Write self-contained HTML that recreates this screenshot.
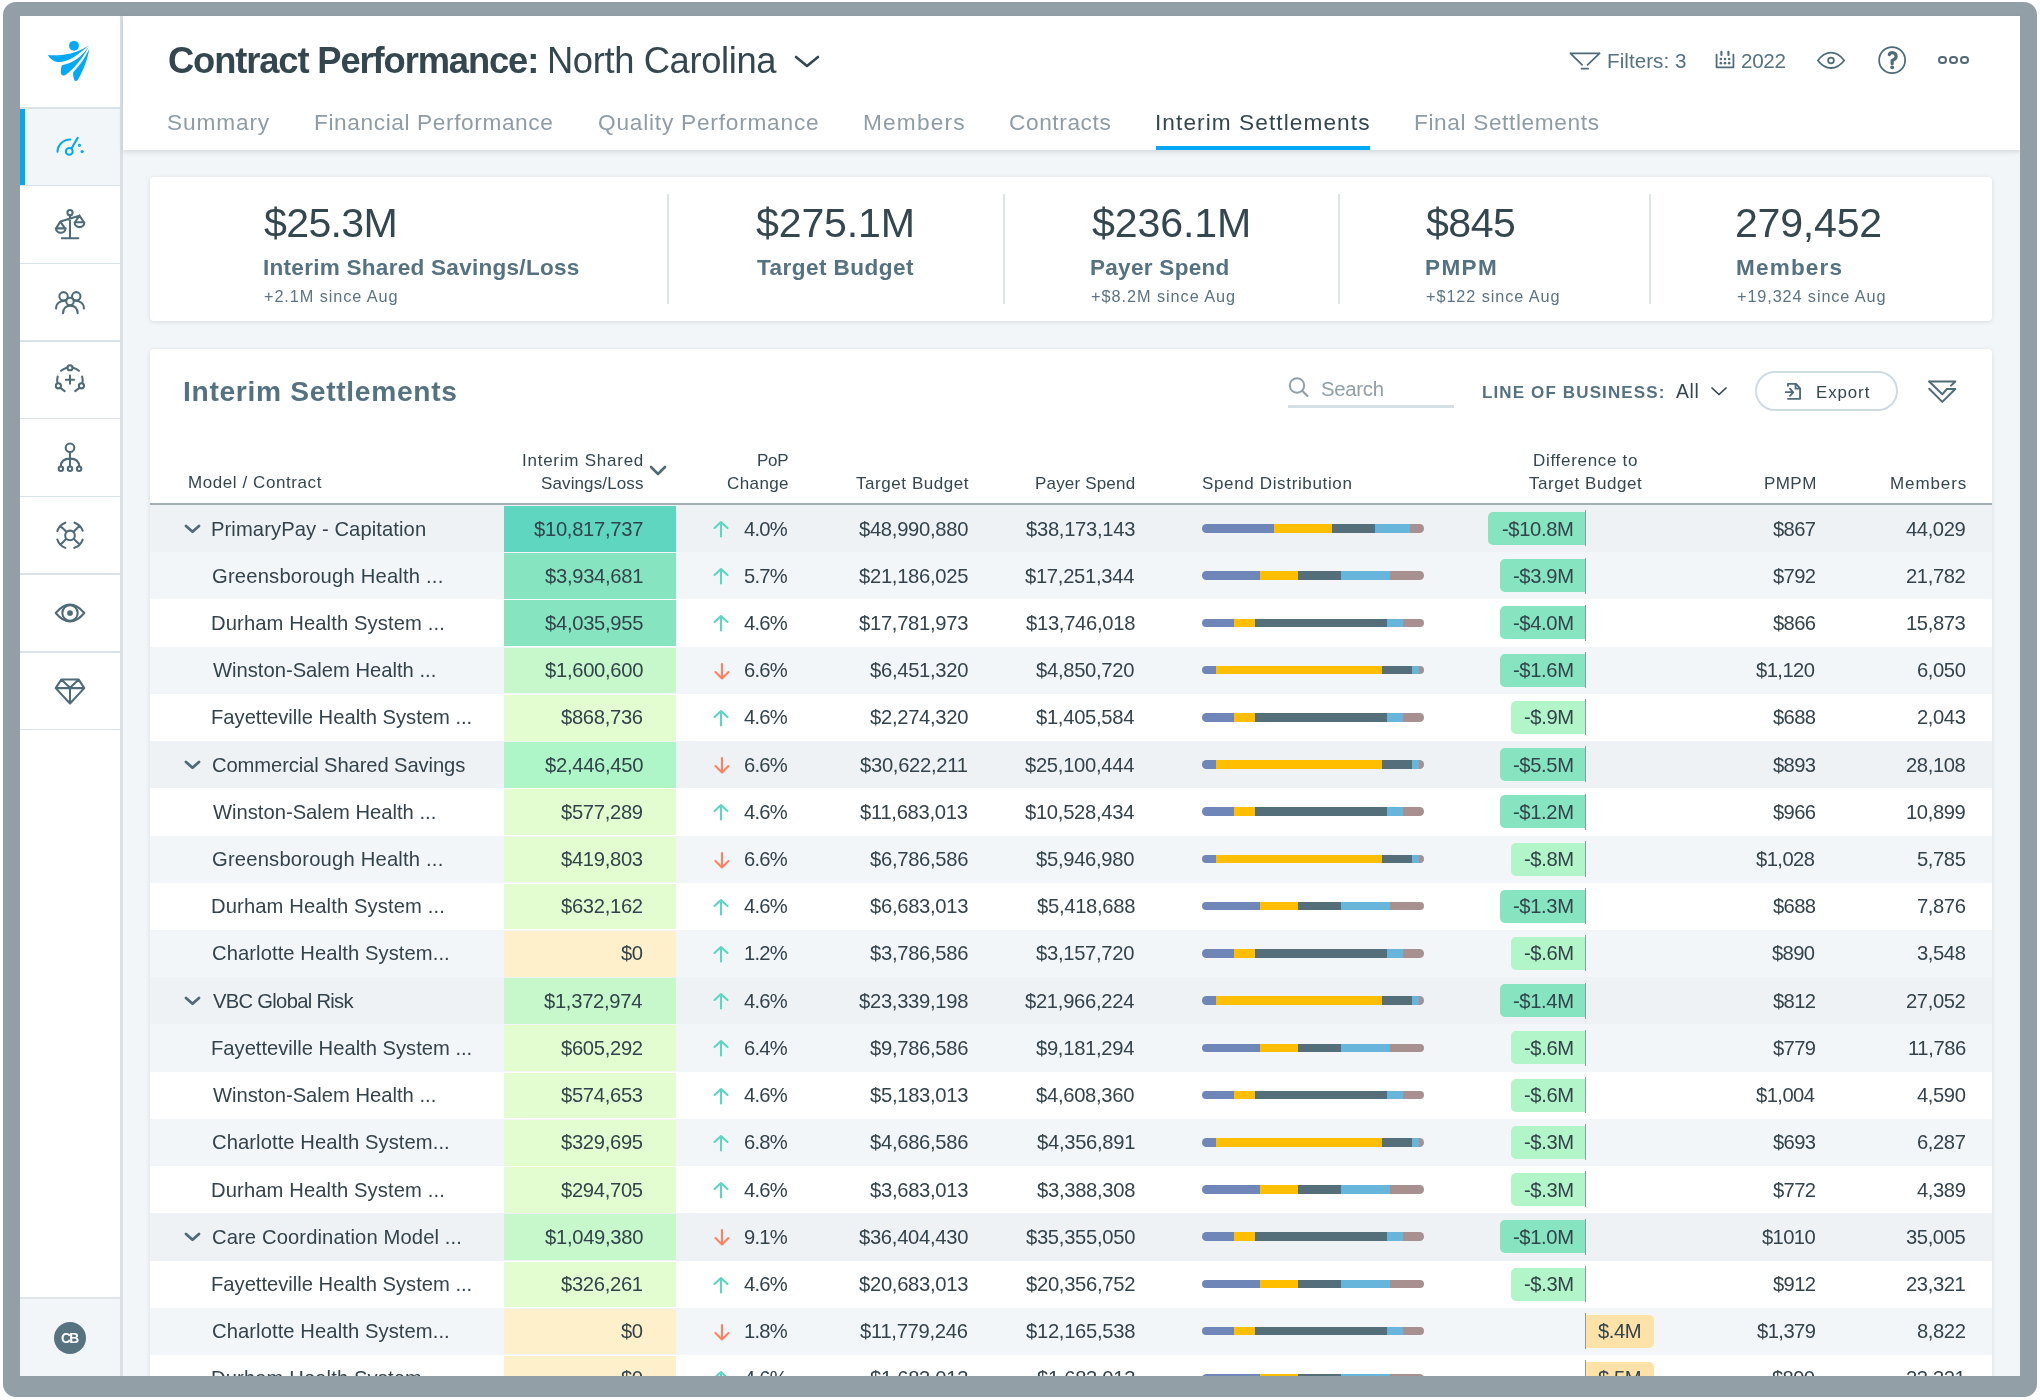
<!DOCTYPE html>
<html><head><meta charset="utf-8"><style>
html,body{margin:0;padding:0;}
body{width:2040px;height:1400px;position:relative;overflow:hidden;background:#ffffff;font-family:"Liberation Sans",sans-serif;}
.t{position:absolute;white-space:nowrap;line-height:1;will-change:transform;}
.r{position:absolute;}
</style></head><body>
<div class="r" style="left:3px;top:2px;width:2034px;height:1395px;background:#939fa6;border-radius:13px;"></div>
<div class="r" style="left:20px;top:16px;width:2000px;height:1360px;background:#f3f6f8;"></div>
<div class="r" style="left:20px;top:16px;width:100px;height:1360px;background:#ffffff;"></div>
<div class="r" style="left:120px;top:16px;width:3px;height:1360px;background:#d9e1e6;"></div>
<div class="r" style="left:20px;top:108px;width:100px;height:77px;background:#f3f6f9;"></div>
<div class="r" style="left:20px;top:108px;width:5px;height:77px;background:#03a9f4;"></div>
<div class="r" style="left:20px;top:107.1px;width:100px;height:1.6px;background:#d9e2e7;"></div>
<div class="r" style="left:20px;top:184.8px;width:100px;height:1.6px;background:#d9e2e7;"></div>
<div class="r" style="left:20px;top:262.5px;width:100px;height:1.6px;background:#d9e2e7;"></div>
<div class="r" style="left:20px;top:340.2px;width:100px;height:1.6px;background:#d9e2e7;"></div>
<div class="r" style="left:20px;top:417.9px;width:100px;height:1.6px;background:#d9e2e7;"></div>
<div class="r" style="left:20px;top:495.6px;width:100px;height:1.6px;background:#d9e2e7;"></div>
<div class="r" style="left:20px;top:573.3px;width:100px;height:1.6px;background:#d9e2e7;"></div>
<div class="r" style="left:20px;top:651.0px;width:100px;height:1.6px;background:#d9e2e7;"></div>
<div class="r" style="left:20px;top:728.7px;width:100px;height:1.6px;background:#d9e2e7;"></div>
<div class="r" style="left:20px;top:1298px;width:100px;height:78px;background:#f3f6f8;"></div>
<div class="r" style="left:20px;top:1297px;width:100px;height:2px;background:#dfe6eb;"></div>
<svg class="r" style="left:40px;top:30px;" width="60" height="60" viewBox="0 0 1400 1400" fill="none"><g fill="#03a9f4"><circle cx="793" cy="370" r="115"/><path d="M185,585 C420,600 820,590 1140,355 C900,580 650,750 430,745 C300,740 230,660 185,585 Z"/><path d="M510,820 C760,780 960,640 1145,380 C1000,650 800,900 610,1040 C540,1080 490,1060 488,1000 C485,920 495,860 510,820 Z"/><path d="M775,985 C900,850 1040,690 1150,440 C1110,700 1010,950 885,1160 C845,1210 800,1195 790,1130 C772,1060 770,1020 775,985 Z"/></g></svg>
<svg class="r" style="left:45px;top:120px;" width="50" height="50" viewBox="0 0 1400 1400" fill="none"><g stroke="#03a9f4" stroke-width="58" stroke-linecap="round" stroke-linejoin="round"><path d="M350,890 A360,350 0 0 1 710,545"/><circle cx="680" cy="880" r="95"/><path d="M745,790 L915,500"/><circle cx="965" cy="710" r="28" stroke-width="36"/></g><circle cx="1040" cy="885" r="45" fill="#03a9f4"/></svg>
<svg class="r" style="left:45px;top:198px;" width="50" height="50" viewBox="0 0 1400 1400" fill="none"><g stroke="#4f6b78" stroke-width="58" stroke-linecap="round" stroke-linejoin="round"><circle cx="700" cy="410" r="72"/><path d="M700,482 L700,1110 M470,1125 L935,1125 M430,660 L965,495 M430,660 L310,850 M430,660 L560,850 M305,850 L578,850 M305,850 A137,137 0 0 0 578,850 M965,495 L840,680 M965,495 L1090,680 M830,680 L1102,680 M830,680 A136,136 0 0 0 1102,680"/></g></svg>
<svg class="r" style="left:45px;top:276px;" width="50" height="50" viewBox="0 0 1400 1400" fill="none"><g stroke="#4f6b78" stroke-width="58" stroke-linecap="round" stroke-linejoin="round"><circle cx="520" cy="570" r="118"/><circle cx="875" cy="570" r="118"/><circle cx="700" cy="712" r="105"/><path d="M310,910 C310,770 420,690 565,690 M1090,910 C1090,770 980,690 835,690 M505,1045 C505,900 600,830 710,830 C820,830 915,900 915,1045"/></g></svg>
<svg class="r" style="left:45px;top:354px;" width="50" height="50" viewBox="0 0 1400 1400" fill="none"><g stroke="#4f6b78" stroke-width="58" stroke-linecap="round" stroke-linejoin="round"><circle cx="700" cy="385" r="72"/><circle cx="375" cy="890" r="72"/><circle cx="1020" cy="890" r="72"/><path d="M450,470 C510,420 570,395 630,378 M770,378 C830,395 890,420 950,470 M355,630 C335,700 335,760 350,815 M430,950 L550,1040 M1040,630 C1060,700 1060,760 1048,815 M965,950 L845,1040 M700,605 L700,830 M585,720 L815,720"/></g></svg>
<svg class="r" style="left:45px;top:432px;" width="50" height="50" viewBox="0 0 1400 1400" fill="none"><g stroke="#4f6b78" stroke-width="58" stroke-linecap="round" stroke-linejoin="round"><circle cx="700" cy="440" r="120"/><path d="M700,560 L700,965 M445,965 C445,800 560,745 700,745 C840,745 955,800 955,965"/><circle cx="445" cy="1030" r="62"/><circle cx="700" cy="1030" r="62"/><circle cx="955" cy="1030" r="62"/></g></svg>
<svg class="r" style="left:45px;top:510px;" width="50" height="50" viewBox="0 0 1400 1400" fill="none"><g stroke="#4f6b78" stroke-width="58" stroke-linecap="round" stroke-linejoin="round"><circle cx="700" cy="712" r="135"/><path d="M345,590 A365,365 0 0 1 570,355 M825,355 A365,365 0 0 1 1055,580 M1055,830 A365,365 0 0 1 820,1060 M570,1060 A365,365 0 0 1 345,825 M600,610 L430,445 M800,610 L970,440 M590,815 L440,965 M810,815 L960,960"/></g></svg>
<svg class="r" style="left:45px;top:588px;" width="50" height="50" viewBox="0 0 1400 1400" fill="none"><g stroke="#4f6b78" stroke-width="58" stroke-linecap="round" stroke-linejoin="round"><path d="M300,700 C450,520 570,465 700,465 C830,465 950,520 1100,700 C950,880 830,935 700,935 C570,935 450,880 300,700 Z"/><circle cx="700" cy="700" r="215"/></g><circle cx="700" cy="700" r="80" fill="#4f6b78"/></svg>
<svg class="r" style="left:45px;top:666px;" width="50" height="50" viewBox="0 0 1400 1400" fill="none"><g stroke="#4f6b78" stroke-width="58" stroke-linecap="round" stroke-linejoin="round"><path d="M455,380 L945,380 L1100,620 L700,1050 L300,620 Z M300,620 L1100,620 M470,390 L700,610 L930,390 M700,620 L700,1040"/></g></svg>
<div class="r" style="left:54px;top:1322px;width:32px;height:32px;border-radius:50%;background:#587380;"></div>
<div class="t" style="left:60.90px;top:1332.00px;font-size:13.81px;color:#ffffff;font-weight:700;letter-spacing:-1.700px;">CB</div>
<div class="r" style="left:123px;top:16px;width:1897px;height:134px;background:#ffffff;box-shadow:0 2px 5px rgba(60,80,90,0.18);"></div>
<div class="t" style="left:167.50px;top:43.00px;font-size:36.34px;color:#34474f;font-weight:700;letter-spacing:-1.120px;">Contract Performance:</div>
<div class="t" style="left:547.20px;top:43.00px;font-size:36.34px;color:#34474f;letter-spacing:-0.369px;">North Carolina</div>
<svg class="r" style="left:794px;top:55px;" width="26" height="13" viewBox="0 0 26 13" fill="none"><path d="M2,2 L13,11 L24,2" stroke="#34474f" stroke-width="2.6" stroke-linecap="round" stroke-linejoin="round"/></svg>
<div class="t" style="left:166.80px;top:111.00px;font-size:22.67px;color:#8e9da5;letter-spacing:0.867px;">Summary</div>
<div class="t" style="left:314.10px;top:111.00px;font-size:22.67px;color:#8e9da5;letter-spacing:0.610px;">Financial Performance</div>
<div class="t" style="left:598.10px;top:111.00px;font-size:22.67px;color:#8e9da5;letter-spacing:0.783px;">Quality Performance</div>
<div class="t" style="left:862.80px;top:111.00px;font-size:22.67px;color:#8e9da5;letter-spacing:1.183px;">Members</div>
<div class="t" style="left:1009.00px;top:111.00px;font-size:22.67px;color:#8e9da5;letter-spacing:0.600px;">Contracts</div>
<div class="t" style="left:1154.90px;top:111.00px;font-size:22.67px;color:#34474f;letter-spacing:1.072px;">Interim Settlements</div>
<div class="t" style="left:1414.00px;top:111.00px;font-size:22.67px;color:#8e9da5;letter-spacing:0.625px;">Final Settlements</div>
<div class="r" style="left:1156px;top:145.5px;width:214px;height:4px;background:#03a9f4;"></div>
<svg class="r" style="left:1565px;top:42px;" width="40" height="40" viewBox="0 0 1400 1400" fill="none"><g stroke="#4f6b78" stroke-width="60" stroke-linecap="round" stroke-linejoin="round"><path d="M190,400 L1210,400 M190,400 L600,800 M1210,400 L790,800 M580,935 L810,935"/></g></svg>
<div class="t" style="left:1606.70px;top:51.00px;font-size:20.64px;color:#557280;letter-spacing:0.044px;">Filters: 3</div>
<svg class="r" style="left:1705px;top:42px;" width="40" height="40" viewBox="0 0 1400 1400" fill="none"><g stroke="#4f6b78" stroke-width="62" stroke-linecap="round"><path d="M405,440 L405,885 L995,885 L995,440" stroke-linejoin="round"/><path d="M575,345 L575,455 M820,345 L820,455" stroke-width="75"/></g><g fill="#4f6b78"><circle cx="555" cy="595" r="45"/><circle cx="700" cy="595" r="45"/><circle cx="845" cy="595" r="45"/><circle cx="555" cy="740" r="45"/><circle cx="700" cy="740" r="45"/><circle cx="845" cy="740" r="45"/></g></svg>
<div class="t" style="left:1741.30px;top:51.00px;font-size:20.64px;color:#557280;letter-spacing:-0.300px;">2022</div>
<svg class="r" style="left:1811px;top:40px;" width="40" height="40" viewBox="0 0 1400 1400" fill="none"><g stroke="#4f6b78" stroke-width="62"><path d="M240,715 C420,480 560,445 700,445 C840,445 980,480 1160,715 C980,950 840,980 700,980 C560,980 420,950 240,715 Z" stroke-linejoin="round"/><circle cx="700" cy="715" r="100"/></g></svg>
<svg class="r" style="left:1872px;top:40px;" width="40" height="40" viewBox="0 0 1400 1400" fill="none"><circle cx="705" cy="705" r="455" stroke="#4f6b78" stroke-width="62"/><path d="M605,510 C620,455 665,440 712,440 C790,440 845,500 845,580 C845,650 790,690 705,715 L705,830" stroke="#4f6b78" stroke-width="112" stroke-linecap="round" stroke-linejoin="round"/><circle cx="705" cy="955" r="66" fill="#4f6b78"/></svg>
<div class="r" style="left:1938.0px;top:55.7px;width:8.6px;height:8.6px;border-radius:50%;box-sizing:border-box;border:2px solid #4f6b78;"></div>
<div class="r" style="left:1949.2px;top:55.7px;width:8.6px;height:8.6px;border-radius:50%;box-sizing:border-box;border:2px solid #4f6b78;"></div>
<div class="r" style="left:1960.4px;top:55.7px;width:8.6px;height:8.6px;border-radius:50%;box-sizing:border-box;border:2px solid #4f6b78;"></div>
<div class="r" style="left:150px;top:177px;width:1842px;height:144px;background:#ffffff;border-radius:4px;box-shadow:0 1px 4px rgba(60,80,90,0.16);"></div>
<div class="r" style="left:667px;top:194px;width:2px;height:110px;background:#dfe6ea;"></div>
<div class="r" style="left:1003px;top:194px;width:2px;height:110px;background:#dfe6ea;"></div>
<div class="r" style="left:1338px;top:194px;width:2px;height:110px;background:#dfe6ea;"></div>
<div class="r" style="left:1649px;top:194px;width:2px;height:110px;background:#dfe6ea;"></div>
<div class="t" style="left:263.80px;top:203.00px;font-size:41.13px;color:#34474f;letter-spacing:-0.680px;">$25.3M</div>
<div class="t" style="left:262.70px;top:257.00px;font-size:22.53px;color:#557280;font-weight:700;letter-spacing:0.277px;">Interim Shared Savings/Loss</div>
<div class="t" style="left:263.50px;top:288.00px;font-size:16.28px;color:#5d7480;letter-spacing:0.914px;">+2.1M since Aug</div>
<div class="t" style="left:756.30px;top:203.00px;font-size:41.13px;color:#34474f;letter-spacing:-0.167px;">$275.1M</div>
<div class="t" style="left:756.50px;top:257.00px;font-size:22.53px;color:#557280;font-weight:700;letter-spacing:0.458px;">Target Budget</div>
<div class="t" style="left:1091.50px;top:203.00px;font-size:41.13px;color:#34474f;letter-spacing:-0.117px;">$236.1M</div>
<div class="t" style="left:1090.40px;top:257.00px;font-size:22.53px;color:#557280;font-weight:700;letter-spacing:0.290px;">Payer Spend</div>
<div class="t" style="left:1091.20px;top:288.00px;font-size:16.28px;color:#5d7480;letter-spacing:0.960px;">+$8.2M since Aug</div>
<div class="t" style="left:1426.20px;top:203.00px;font-size:41.13px;color:#34474f;letter-spacing:-0.500px;">$845</div>
<div class="t" style="left:1425.10px;top:257.00px;font-size:22.53px;color:#557280;font-weight:700;letter-spacing:1.367px;">PMPM</div>
<div class="t" style="left:1425.90px;top:288.00px;font-size:16.28px;color:#5d7480;letter-spacing:0.921px;">+$122 since Aug</div>
<div class="t" style="left:1735.40px;top:203.00px;font-size:41.13px;color:#34474f;letter-spacing:-0.250px;">279,452</div>
<div class="t" style="left:1735.90px;top:257.00px;font-size:22.53px;color:#557280;font-weight:700;letter-spacing:1.200px;">Members</div>
<div class="t" style="left:1736.70px;top:288.00px;font-size:16.28px;color:#5d7480;letter-spacing:0.887px;">+19,324 since Aug</div>
<div class="r" style="left:150px;top:349px;width:1842px;height:1100px;background:#ffffff;border-radius:4px;box-shadow:0 1px 4px rgba(60,80,90,0.16);"></div>
<div class="t" style="left:183.20px;top:377.00px;font-size:28.2px;color:#557280;font-weight:700;letter-spacing:0.689px;">Interim Settlements</div>
<svg class="r" style="left:1286px;top:375px;" width="25" height="25" viewBox="0 0 25 25" fill="none"><circle cx="11" cy="10.5" r="7.2" stroke="#8fa0a8" stroke-width="2"/><path d="M16.2,15.7 L21.5,21" stroke="#8fa0a8" stroke-width="2.2" stroke-linecap="round"/></svg>
<div class="t" style="left:1320.80px;top:379.00px;font-size:20.35px;color:#8fa0a8;letter-spacing:-0.300px;">Search</div>
<div class="r" style="left:1288px;top:405px;width:166px;height:3px;background:#d5e0e6;"></div>
<div class="t" style="left:1482.30px;top:384.00px;font-size:17.01px;color:#557280;font-weight:700;letter-spacing:1.131px;">LINE OF BUSINESS:</div>
<div class="t" style="left:1675.70px;top:382.00px;font-size:19.33px;color:#34474f;letter-spacing:0.600px;">All</div>
<svg class="r" style="left:1709px;top:385px;" width="20" height="12" viewBox="0 0 20 12" fill="none"><path d="M3,3 L10,9.5 L17,3" stroke="#34474f" stroke-width="1.7" stroke-linecap="round" stroke-linejoin="round"/></svg>
<div class="r" style="left:1755px;top:371px;width:143px;height:40px;box-sizing:border-box;border:2.8px solid #cfdbe2;border-radius:20px;"></div>
<svg class="r" style="left:1778px;top:376px;" width="30" height="30" viewBox="0 0 1400 1400" fill="none"><g stroke="#4f6b78" stroke-width="88" stroke-linecap="round" stroke-linejoin="round"><path d="M465,460 L465,370 L840,370 L1030,580 L1030,1065 L465,1065 M820,385 L820,590 L1020,590 M360,755 L700,755 M560,590 L710,760 L560,925"/></g></svg>
<div class="t" style="left:1816.00px;top:385.00px;font-size:16.86px;color:#34474f;letter-spacing:0.920px;">Export</div>
<svg class="r" style="left:1920px;top:372px;" width="45" height="38" viewBox="0 0 45 38" fill="none"><g stroke="#4f6b78" stroke-width="2" stroke-linejoin="round" stroke-linecap="round" fill="none"><path d="M9.2,9.5 L35.3,9.5 L31,13.6"/><path d="M9.2,9.5 L22.3,22.3 L26.9,17 L35.3,17 L22.3,29.9 L9.2,16.8"/></g></svg>
<div class="t" style="left:187.80px;top:474.00px;font-size:17.01px;color:#34474f;letter-spacing:0.580px;">Model / Contract</div>
<div class="t" style="left:522.30px;top:452.00px;font-size:17.01px;color:#34474f;letter-spacing:0.754px;">Interim Shared</div>
<div class="t" style="left:541.00px;top:475.00px;font-size:17.01px;color:#34474f;letter-spacing:0.118px;">Savings/Loss</div>
<svg class="r" style="left:648px;top:464px;" width="20" height="13" viewBox="0 0 20 13" fill="none"><path d="M3,3 L10,10 L17,3" stroke="#4f6b78" stroke-width="2.6" stroke-linecap="round" stroke-linejoin="round"/></svg>
<div class="t" style="left:756.80px;top:452.00px;font-size:17.01px;color:#34474f;letter-spacing:-0.300px;">PoP</div>
<div class="t" style="left:726.70px;top:475.00px;font-size:17.01px;color:#34474f;letter-spacing:0.400px;">Change</div>
<div class="t" style="left:855.60px;top:475.00px;font-size:17.01px;color:#34474f;letter-spacing:0.558px;">Target Budget</div>
<div class="t" style="left:1035.40px;top:475.00px;font-size:17.01px;color:#34474f;letter-spacing:0.180px;">Payer Spend</div>
<div class="t" style="left:1201.70px;top:475.00px;font-size:17.01px;color:#34474f;letter-spacing:0.647px;">Spend Distribution</div>
<div class="t" style="left:1533.30px;top:452.00px;font-size:17.01px;color:#34474f;letter-spacing:0.700px;">Difference to</div>
<div class="t" style="left:1529.20px;top:475.00px;font-size:17.01px;color:#34474f;letter-spacing:0.575px;">Target Budget</div>
<div class="t" style="left:1764.00px;top:475.00px;font-size:17.01px;color:#34474f;letter-spacing:0.433px;">PMPM</div>
<div class="t" style="left:1889.80px;top:475.00px;font-size:17.01px;color:#34474f;letter-spacing:0.900px;">Members</div>
<div class="r" style="left:150px;top:503px;width:1842px;height:2px;background:#a3aeb5;"></div>
<div class="r" style="left:150px;top:505px;width:1842px;height:47px;background:#eef2f5;"></div>
<div class="r" style="left:504px;top:506.00px;width:172px;height:45.72px;background:#5fd6c0;"></div>
<svg class="r" style="left:182.9px;top:523px;" width="20" height="12" viewBox="0 0 20 12" fill="none"><path d="M3,3 L9.5,8.8 L16,3" stroke="#4f6b78" stroke-width="2.8" stroke-linecap="round" stroke-linejoin="round"/></svg>
<div class="t" style="left:211.20px;top:519.00px;font-size:20.2px;color:#33434b;letter-spacing:0.091px;">PrimaryPay - Capitation</div>
<div class="t" style="left:533.89px;top:519.00px;font-size:20.2px;color:#33434b;letter-spacing:-0.289px;">$10,817,737</div>
<svg class="r" style="left:711px;top:519px;" width="20" height="20" viewBox="0 0 20 20" fill="none"><path d="M10,3 L10,17.5 M3.5,9 L10,3 L16.5,9" stroke="#5dd6bf" stroke-width="2.1" stroke-linecap="round" stroke-linejoin="round"/></svg>
<div class="t" style="left:743.65px;top:519.00px;font-size:20.2px;color:#33434b;letter-spacing:-0.750px;">4.0%</div>
<div class="t" style="left:858.60px;top:519.00px;font-size:20.2px;color:#33434b;letter-spacing:-0.290px;">$48,990,880</div>
<div class="t" style="left:1025.59px;top:519.00px;font-size:20.2px;color:#33434b;letter-spacing:-0.289px;">$38,173,143</div>
<div class="r" style="left:1202px;top:524.10px;width:222px;height:8.6px;border-radius:4.3px;overflow:hidden;"><div style="position:absolute;left:0px;top:0;width:72px;height:100%;background:#6f87b8"></div><div style="position:absolute;left:72px;top:0;width:58px;height:100%;background:#ffbf00"></div><div style="position:absolute;left:130px;top:0;width:43px;height:100%;background:#546e7a"></div><div style="position:absolute;left:173px;top:0;width:35px;height:100%;background:#68b5dc"></div><div style="position:absolute;left:208px;top:0;width:14px;height:100%;background:#a89090"></div></div>
<div class="r" style="left:1488px;top:512px;width:97px;height:33px;background:#86e5c0;border-radius:5px 0 0 5px;"></div>
<div class="t" style="left:1501.85px;top:519.00px;font-size:20.2px;color:#33434b;letter-spacing:-0.358px;">-$10.8M</div>
<div class="r" style="left:1584.5px;top:510px;width:1.5px;height:36px;background:#8c9aa2;"></div>
<div class="t" style="left:1772.67px;top:519.00px;font-size:20.2px;color:#33434b;letter-spacing:-0.657px;">$867</div>
<div class="t" style="left:1906.40px;top:519.00px;font-size:20.2px;color:#33434b;letter-spacing:-0.399px;">44,029</div>
<div class="r" style="left:150px;top:552px;width:1842px;height:47px;background:#f3f6f9;"></div>
<div class="r" style="left:504px;top:553.22px;width:172px;height:45.72px;background:#86e5c0;"></div>
<div class="t" style="left:211.80px;top:566.00px;font-size:20.2px;color:#33434b;letter-spacing:0.200px;">Greensborough Health ...</div>
<div class="t" style="left:544.80px;top:566.00px;font-size:20.2px;color:#33434b;letter-spacing:-0.289px;">$3,934,681</div>
<svg class="r" style="left:711px;top:566px;" width="20" height="20" viewBox="0 0 20 20" fill="none"><path d="M10,3 L10,17.5 M3.5,9 L10,3 L16.5,9" stroke="#5dd6bf" stroke-width="2.1" stroke-linecap="round" stroke-linejoin="round"/></svg>
<div class="t" style="left:743.63px;top:566.00px;font-size:20.2px;color:#33434b;letter-spacing:-0.743px;">5.7%</div>
<div class="t" style="left:858.69px;top:566.00px;font-size:20.2px;color:#33434b;letter-spacing:-0.289px;">$21,186,025</div>
<div class="t" style="left:1025.30px;top:566.00px;font-size:20.2px;color:#33434b;letter-spacing:-0.290px;">$17,251,344</div>
<div class="r" style="left:1202px;top:571.32px;width:222px;height:8.6px;border-radius:4.3px;overflow:hidden;"><div style="position:absolute;left:0px;top:0;width:58px;height:100%;background:#6f87b8"></div><div style="position:absolute;left:58px;top:0;width:38px;height:100%;background:#ffbf00"></div><div style="position:absolute;left:96px;top:0;width:43px;height:100%;background:#546e7a"></div><div style="position:absolute;left:139px;top:0;width:49px;height:100%;background:#68b5dc"></div><div style="position:absolute;left:188px;top:0;width:34px;height:100%;background:#a89090"></div></div>
<div class="r" style="left:1500px;top:559px;width:85px;height:33px;background:#86e5c0;border-radius:5px 0 0 5px;"></div>
<div class="t" style="left:1512.81px;top:566.00px;font-size:20.2px;color:#33434b;letter-spacing:-0.362px;">-$3.9M</div>
<div class="r" style="left:1584.5px;top:558px;width:1.5px;height:36px;background:#8c9aa2;"></div>
<div class="t" style="left:1772.67px;top:566.00px;font-size:20.2px;color:#33434b;letter-spacing:-0.657px;">$792</div>
<div class="t" style="left:1906.38px;top:566.00px;font-size:20.2px;color:#33434b;letter-spacing:-0.395px;">21,782</div>
<div class="r" style="left:150px;top:599px;width:1842px;height:48px;background:#ffffff;"></div>
<div class="r" style="left:504px;top:600.44px;width:172px;height:45.72px;background:#86e5c0;"></div>
<div class="t" style="left:211.20px;top:613.00px;font-size:20.2px;color:#33434b;letter-spacing:0.117px;">Durham Health System ...</div>
<div class="t" style="left:544.70px;top:613.00px;font-size:20.2px;color:#33434b;letter-spacing:-0.289px;">$4,035,955</div>
<svg class="r" style="left:711px;top:613px;" width="20" height="20" viewBox="0 0 20 20" fill="none"><path d="M10,3 L10,17.5 M3.5,9 L10,3 L16.5,9" stroke="#5dd6bf" stroke-width="2.1" stroke-linecap="round" stroke-linejoin="round"/></svg>
<div class="t" style="left:743.65px;top:613.00px;font-size:20.2px;color:#33434b;letter-spacing:-0.750px;">4.6%</div>
<div class="t" style="left:858.69px;top:613.00px;font-size:20.2px;color:#33434b;letter-spacing:-0.289px;">$17,781,973</div>
<div class="t" style="left:1025.59px;top:613.00px;font-size:20.2px;color:#33434b;letter-spacing:-0.289px;">$13,746,018</div>
<div class="r" style="left:1202px;top:618.54px;width:222px;height:8.6px;border-radius:4.3px;overflow:hidden;"><div style="position:absolute;left:0px;top:0;width:32px;height:100%;background:#6f87b8"></div><div style="position:absolute;left:32px;top:0;width:21px;height:100%;background:#ffbf00"></div><div style="position:absolute;left:53px;top:0;width:132px;height:100%;background:#546e7a"></div><div style="position:absolute;left:185px;top:0;width:16px;height:100%;background:#68b5dc"></div><div style="position:absolute;left:201px;top:0;width:21px;height:100%;background:#a89090"></div></div>
<div class="r" style="left:1500px;top:606px;width:85px;height:33px;background:#86e5c0;border-radius:5px 0 0 5px;"></div>
<div class="t" style="left:1512.81px;top:613.00px;font-size:20.2px;color:#33434b;letter-spacing:-0.362px;">-$4.0M</div>
<div class="r" style="left:1584.5px;top:605px;width:1.5px;height:36px;background:#8c9aa2;"></div>
<div class="t" style="left:1772.58px;top:613.00px;font-size:20.2px;color:#33434b;letter-spacing:-0.659px;">$866</div>
<div class="t" style="left:1906.26px;top:613.00px;font-size:20.2px;color:#33434b;letter-spacing:-0.393px;">15,873</div>
<div class="r" style="left:150px;top:647px;width:1842px;height:47px;background:#f3f6f9;"></div>
<div class="r" style="left:504px;top:647.66px;width:172px;height:45.72px;background:#c6f8cb;"></div>
<div class="t" style="left:212.80px;top:660.00px;font-size:20.2px;color:#33434b;">Winston-Salem Health ...</div>
<div class="t" style="left:544.61px;top:660.00px;font-size:20.2px;color:#33434b;letter-spacing:-0.289px;">$1,600,600</div>
<svg class="r" style="left:712px;top:661px;" width="20" height="20" viewBox="0 0 20 20" fill="none"><path d="M10,3 L10,17 M3.5,11 L10,17.5 L16.5,11" stroke="#ff8060" stroke-width="2.1" stroke-linecap="round" stroke-linejoin="round"/></svg>
<div class="t" style="left:743.62px;top:660.00px;font-size:20.2px;color:#33434b;letter-spacing:-0.740px;">6.6%</div>
<div class="t" style="left:869.51px;top:660.00px;font-size:20.2px;color:#33434b;letter-spacing:-0.289px;">$6,451,320</div>
<div class="t" style="left:1036.41px;top:660.00px;font-size:20.2px;color:#33434b;letter-spacing:-0.289px;">$4,850,720</div>
<div class="r" style="left:1202px;top:665.76px;width:222px;height:8.6px;border-radius:4.3px;overflow:hidden;"><div style="position:absolute;left:0px;top:0;width:14px;height:100%;background:#6f87b8"></div><div style="position:absolute;left:14px;top:0;width:166px;height:100%;background:#ffbf00"></div><div style="position:absolute;left:180px;top:0;width:30px;height:100%;background:#546e7a"></div><div style="position:absolute;left:210px;top:0;width:7px;height:100%;background:#68b5dc"></div><div style="position:absolute;left:217px;top:0;width:5px;height:100%;background:#a89090"></div></div>
<div class="r" style="left:1500px;top:654px;width:85px;height:33px;background:#86e5c0;border-radius:5px 0 0 5px;"></div>
<div class="t" style="left:1512.81px;top:660.00px;font-size:20.2px;color:#33434b;letter-spacing:-0.362px;">-$1.6M</div>
<div class="r" style="left:1584.5px;top:652px;width:1.5px;height:36px;background:#8c9aa2;"></div>
<div class="t" style="left:1756.34px;top:660.00px;font-size:20.2px;color:#33434b;letter-spacing:-0.548px;">$1,120</div>
<div class="t" style="left:1917.11px;top:660.00px;font-size:20.2px;color:#33434b;letter-spacing:-0.403px;">6,050</div>
<div class="r" style="left:150px;top:694px;width:1842px;height:47px;background:#ffffff;"></div>
<div class="r" style="left:504px;top:694.88px;width:172px;height:45.72px;background:#e3fdd1;"></div>
<div class="t" style="left:211.20px;top:707.00px;font-size:20.2px;color:#33434b;letter-spacing:-0.007px;">Fayetteville Health System ...</div>
<div class="t" style="left:561.16px;top:707.00px;font-size:20.2px;color:#33434b;letter-spacing:-0.309px;">$868,736</div>
<svg class="r" style="left:711px;top:708px;" width="20" height="20" viewBox="0 0 20 20" fill="none"><path d="M10,3 L10,17.5 M3.5,9 L10,3 L16.5,9" stroke="#5dd6bf" stroke-width="2.1" stroke-linecap="round" stroke-linejoin="round"/></svg>
<div class="t" style="left:743.65px;top:707.00px;font-size:20.2px;color:#33434b;letter-spacing:-0.750px;">4.6%</div>
<div class="t" style="left:869.51px;top:707.00px;font-size:20.2px;color:#33434b;letter-spacing:-0.289px;">$2,274,320</div>
<div class="t" style="left:1036.21px;top:707.00px;font-size:20.2px;color:#33434b;letter-spacing:-0.290px;">$1,405,584</div>
<div class="r" style="left:1202px;top:712.98px;width:222px;height:8.6px;border-radius:4.3px;overflow:hidden;"><div style="position:absolute;left:0px;top:0;width:32px;height:100%;background:#6f87b8"></div><div style="position:absolute;left:32px;top:0;width:21px;height:100%;background:#ffbf00"></div><div style="position:absolute;left:53px;top:0;width:132px;height:100%;background:#546e7a"></div><div style="position:absolute;left:185px;top:0;width:16px;height:100%;background:#68b5dc"></div><div style="position:absolute;left:201px;top:0;width:21px;height:100%;background:#a89090"></div></div>
<div class="r" style="left:1511px;top:701px;width:74px;height:33px;background:#b2f5c8;border-radius:5px 0 0 5px;"></div>
<div class="t" style="left:1523.68px;top:707.00px;font-size:20.2px;color:#33434b;letter-spacing:-0.369px;">-$.9M</div>
<div class="r" style="left:1584.5px;top:699px;width:1.5px;height:36px;background:#8c9aa2;"></div>
<div class="t" style="left:1772.58px;top:707.00px;font-size:20.2px;color:#33434b;letter-spacing:-0.659px;">$688</div>
<div class="t" style="left:1917.21px;top:707.00px;font-size:20.2px;color:#33434b;letter-spacing:-0.402px;">2,043</div>
<div class="r" style="left:150px;top:741px;width:1842px;height:47px;background:#eef2f5;"></div>
<div class="r" style="left:504px;top:742.10px;width:172px;height:45.72px;background:#aef5c8;"></div>
<svg class="r" style="left:182.9px;top:759px;" width="20" height="12" viewBox="0 0 20 12" fill="none"><path d="M3,3 L9.5,8.8 L16,3" stroke="#4f6b78" stroke-width="2.8" stroke-linecap="round" stroke-linejoin="round"/></svg>
<div class="t" style="left:211.80px;top:755.00px;font-size:20.2px;color:#33434b;letter-spacing:-0.108px;">Commercial Shared Savings</div>
<div class="t" style="left:544.61px;top:755.00px;font-size:20.2px;color:#33434b;letter-spacing:-0.289px;">$2,446,450</div>
<svg class="r" style="left:712px;top:755px;" width="20" height="20" viewBox="0 0 20 20" fill="none"><path d="M10,3 L10,17 M3.5,11 L10,17.5 L16.5,11" stroke="#ff8060" stroke-width="2.1" stroke-linecap="round" stroke-linejoin="round"/></svg>
<div class="t" style="left:743.62px;top:755.00px;font-size:20.2px;color:#33434b;letter-spacing:-0.740px;">6.6%</div>
<div class="t" style="left:860.25px;top:755.00px;font-size:20.2px;color:#33434b;letter-spacing:-0.285px;">$30,622,211</div>
<div class="t" style="left:1025.30px;top:755.00px;font-size:20.2px;color:#33434b;letter-spacing:-0.290px;">$25,100,444</div>
<div class="r" style="left:1202px;top:760.20px;width:222px;height:8.6px;border-radius:4.3px;overflow:hidden;"><div style="position:absolute;left:0px;top:0;width:14px;height:100%;background:#6f87b8"></div><div style="position:absolute;left:14px;top:0;width:166px;height:100%;background:#ffbf00"></div><div style="position:absolute;left:180px;top:0;width:30px;height:100%;background:#546e7a"></div><div style="position:absolute;left:210px;top:0;width:7px;height:100%;background:#68b5dc"></div><div style="position:absolute;left:217px;top:0;width:5px;height:100%;background:#a89090"></div></div>
<div class="r" style="left:1500px;top:748px;width:85px;height:33px;background:#86e5c0;border-radius:5px 0 0 5px;"></div>
<div class="t" style="left:1512.81px;top:755.00px;font-size:20.2px;color:#33434b;letter-spacing:-0.362px;">-$5.5M</div>
<div class="r" style="left:1584.5px;top:746px;width:1.5px;height:36px;background:#8c9aa2;"></div>
<div class="t" style="left:1772.58px;top:755.00px;font-size:20.2px;color:#33434b;letter-spacing:-0.659px;">$893</div>
<div class="t" style="left:1906.28px;top:755.00px;font-size:20.2px;color:#33434b;letter-spacing:-0.396px;">28,108</div>
<div class="r" style="left:150px;top:788px;width:1842px;height:48px;background:#ffffff;"></div>
<div class="r" style="left:504px;top:789.32px;width:172px;height:45.72px;background:#e3fdd1;"></div>
<div class="t" style="left:212.80px;top:802.00px;font-size:20.2px;color:#33434b;">Winston-Salem Health ...</div>
<div class="t" style="left:561.26px;top:802.00px;font-size:20.2px;color:#33434b;letter-spacing:-0.309px;">$577,289</div>
<svg class="r" style="left:711px;top:802px;" width="20" height="20" viewBox="0 0 20 20" fill="none"><path d="M10,3 L10,17.5 M3.5,9 L10,3 L16.5,9" stroke="#5dd6bf" stroke-width="2.1" stroke-linecap="round" stroke-linejoin="round"/></svg>
<div class="t" style="left:743.65px;top:802.00px;font-size:20.2px;color:#33434b;letter-spacing:-0.750px;">4.6%</div>
<div class="t" style="left:860.15px;top:802.00px;font-size:20.2px;color:#33434b;letter-spacing:-0.285px;">$11,683,013</div>
<div class="t" style="left:1025.30px;top:802.00px;font-size:20.2px;color:#33434b;letter-spacing:-0.290px;">$10,528,434</div>
<div class="r" style="left:1202px;top:807.42px;width:222px;height:8.6px;border-radius:4.3px;overflow:hidden;"><div style="position:absolute;left:0px;top:0;width:32px;height:100%;background:#6f87b8"></div><div style="position:absolute;left:32px;top:0;width:21px;height:100%;background:#ffbf00"></div><div style="position:absolute;left:53px;top:0;width:132px;height:100%;background:#546e7a"></div><div style="position:absolute;left:185px;top:0;width:16px;height:100%;background:#68b5dc"></div><div style="position:absolute;left:201px;top:0;width:21px;height:100%;background:#a89090"></div></div>
<div class="r" style="left:1500px;top:795px;width:85px;height:33px;background:#86e5c0;border-radius:5px 0 0 5px;"></div>
<div class="t" style="left:1512.81px;top:802.00px;font-size:20.2px;color:#33434b;letter-spacing:-0.362px;">-$1.2M</div>
<div class="r" style="left:1584.5px;top:794px;width:1.5px;height:36px;background:#8c9aa2;"></div>
<div class="t" style="left:1772.58px;top:802.00px;font-size:20.2px;color:#33434b;letter-spacing:-0.659px;">$966</div>
<div class="t" style="left:1906.36px;top:802.00px;font-size:20.2px;color:#33434b;letter-spacing:-0.392px;">10,899</div>
<div class="r" style="left:150px;top:836px;width:1842px;height:47px;background:#f3f6f9;"></div>
<div class="r" style="left:504px;top:836.54px;width:172px;height:45.72px;background:#e3fdd1;"></div>
<div class="t" style="left:211.80px;top:849.00px;font-size:20.2px;color:#33434b;letter-spacing:0.200px;">Greensborough Health ...</div>
<div class="t" style="left:561.16px;top:849.00px;font-size:20.2px;color:#33434b;letter-spacing:-0.309px;">$419,803</div>
<svg class="r" style="left:712px;top:850px;" width="20" height="20" viewBox="0 0 20 20" fill="none"><path d="M10,3 L10,17 M3.5,11 L10,17.5 L16.5,11" stroke="#ff8060" stroke-width="2.1" stroke-linecap="round" stroke-linejoin="round"/></svg>
<div class="t" style="left:743.62px;top:849.00px;font-size:20.2px;color:#33434b;letter-spacing:-0.740px;">6.6%</div>
<div class="t" style="left:869.60px;top:849.00px;font-size:20.2px;color:#33434b;letter-spacing:-0.289px;">$6,786,586</div>
<div class="t" style="left:1036.41px;top:849.00px;font-size:20.2px;color:#33434b;letter-spacing:-0.289px;">$5,946,980</div>
<div class="r" style="left:1202px;top:854.64px;width:222px;height:8.6px;border-radius:4.3px;overflow:hidden;"><div style="position:absolute;left:0px;top:0;width:14px;height:100%;background:#6f87b8"></div><div style="position:absolute;left:14px;top:0;width:166px;height:100%;background:#ffbf00"></div><div style="position:absolute;left:180px;top:0;width:30px;height:100%;background:#546e7a"></div><div style="position:absolute;left:210px;top:0;width:7px;height:100%;background:#68b5dc"></div><div style="position:absolute;left:217px;top:0;width:5px;height:100%;background:#a89090"></div></div>
<div class="r" style="left:1511px;top:843px;width:74px;height:33px;background:#b2f5c8;border-radius:5px 0 0 5px;"></div>
<div class="t" style="left:1523.68px;top:849.00px;font-size:20.2px;color:#33434b;letter-spacing:-0.369px;">-$.8M</div>
<div class="r" style="left:1584.5px;top:841px;width:1.5px;height:36px;background:#8c9aa2;"></div>
<div class="t" style="left:1756.44px;top:849.00px;font-size:20.2px;color:#33434b;letter-spacing:-0.547px;">$1,028</div>
<div class="t" style="left:1917.21px;top:849.00px;font-size:20.2px;color:#33434b;letter-spacing:-0.403px;">5,785</div>
<div class="r" style="left:150px;top:883px;width:1842px;height:47px;background:#ffffff;"></div>
<div class="r" style="left:504px;top:883.76px;width:172px;height:45.72px;background:#e3fdd1;"></div>
<div class="t" style="left:211.20px;top:896.00px;font-size:20.2px;color:#33434b;letter-spacing:0.117px;">Durham Health System ...</div>
<div class="t" style="left:561.26px;top:896.00px;font-size:20.2px;color:#33434b;letter-spacing:-0.309px;">$632,162</div>
<svg class="r" style="left:711px;top:897px;" width="20" height="20" viewBox="0 0 20 20" fill="none"><path d="M10,3 L10,17.5 M3.5,9 L10,3 L16.5,9" stroke="#5dd6bf" stroke-width="2.1" stroke-linecap="round" stroke-linejoin="round"/></svg>
<div class="t" style="left:743.65px;top:896.00px;font-size:20.2px;color:#33434b;letter-spacing:-0.750px;">4.6%</div>
<div class="t" style="left:869.60px;top:896.00px;font-size:20.2px;color:#33434b;letter-spacing:-0.289px;">$6,683,013</div>
<div class="t" style="left:1036.50px;top:896.00px;font-size:20.2px;color:#33434b;letter-spacing:-0.289px;">$5,418,688</div>
<div class="r" style="left:1202px;top:901.86px;width:222px;height:8.6px;border-radius:4.3px;overflow:hidden;"><div style="position:absolute;left:0px;top:0;width:58px;height:100%;background:#6f87b8"></div><div style="position:absolute;left:58px;top:0;width:38px;height:100%;background:#ffbf00"></div><div style="position:absolute;left:96px;top:0;width:43px;height:100%;background:#546e7a"></div><div style="position:absolute;left:139px;top:0;width:49px;height:100%;background:#68b5dc"></div><div style="position:absolute;left:188px;top:0;width:34px;height:100%;background:#a89090"></div></div>
<div class="r" style="left:1500px;top:890px;width:85px;height:33px;background:#86e5c0;border-radius:5px 0 0 5px;"></div>
<div class="t" style="left:1512.81px;top:896.00px;font-size:20.2px;color:#33434b;letter-spacing:-0.362px;">-$1.3M</div>
<div class="r" style="left:1584.5px;top:888px;width:1.5px;height:36px;background:#8c9aa2;"></div>
<div class="t" style="left:1772.58px;top:896.00px;font-size:20.2px;color:#33434b;letter-spacing:-0.659px;">$688</div>
<div class="t" style="left:1917.21px;top:896.00px;font-size:20.2px;color:#33434b;letter-spacing:-0.402px;">7,876</div>
<div class="r" style="left:150px;top:930px;width:1842px;height:47px;background:#f3f6f9;"></div>
<div class="r" style="left:504px;top:930.98px;width:172px;height:45.72px;background:#fff0cc;"></div>
<div class="t" style="left:211.80px;top:943.00px;font-size:20.2px;color:#33434b;letter-spacing:0.084px;">Charlotte Health System...</div>
<div class="t" style="left:621.26px;top:943.00px;font-size:20.2px;color:#33434b;letter-spacing:-0.559px;">$0</div>
<svg class="r" style="left:711px;top:944px;" width="20" height="20" viewBox="0 0 20 20" fill="none"><path d="M10,3 L10,17.5 M3.5,9 L10,3 L16.5,9" stroke="#5dd6bf" stroke-width="2.1" stroke-linecap="round" stroke-linejoin="round"/></svg>
<div class="t" style="left:743.59px;top:943.00px;font-size:20.2px;color:#33434b;letter-spacing:-0.732px;">1.2%</div>
<div class="t" style="left:869.60px;top:943.00px;font-size:20.2px;color:#33434b;letter-spacing:-0.289px;">$3,786,586</div>
<div class="t" style="left:1036.41px;top:943.00px;font-size:20.2px;color:#33434b;letter-spacing:-0.289px;">$3,157,720</div>
<div class="r" style="left:1202px;top:949.08px;width:222px;height:8.6px;border-radius:4.3px;overflow:hidden;"><div style="position:absolute;left:0px;top:0;width:32px;height:100%;background:#6f87b8"></div><div style="position:absolute;left:32px;top:0;width:21px;height:100%;background:#ffbf00"></div><div style="position:absolute;left:53px;top:0;width:132px;height:100%;background:#546e7a"></div><div style="position:absolute;left:185px;top:0;width:16px;height:100%;background:#68b5dc"></div><div style="position:absolute;left:201px;top:0;width:21px;height:100%;background:#a89090"></div></div>
<div class="r" style="left:1511px;top:937px;width:74px;height:33px;background:#b2f5c8;border-radius:5px 0 0 5px;"></div>
<div class="t" style="left:1523.68px;top:943.00px;font-size:20.2px;color:#33434b;letter-spacing:-0.369px;">-$.6M</div>
<div class="r" style="left:1584.5px;top:935px;width:1.5px;height:36px;background:#8c9aa2;"></div>
<div class="t" style="left:1772.48px;top:943.00px;font-size:20.2px;color:#33434b;letter-spacing:-0.660px;">$890</div>
<div class="t" style="left:1917.22px;top:943.00px;font-size:20.2px;color:#33434b;letter-spacing:-0.404px;">3,548</div>
<div class="r" style="left:150px;top:977px;width:1842px;height:47px;background:#eef2f5;"></div>
<div class="r" style="left:504px;top:978.20px;width:172px;height:45.72px;background:#c6f8cb;"></div>
<svg class="r" style="left:182.9px;top:995px;" width="20" height="12" viewBox="0 0 20 12" fill="none"><path d="M3,3 L9.5,8.8 L16,3" stroke="#4f6b78" stroke-width="2.8" stroke-linecap="round" stroke-linejoin="round"/></svg>
<div class="t" style="left:212.80px;top:991.00px;font-size:20.2px;color:#33434b;letter-spacing:-0.700px;">VBC Global Risk</div>
<div class="t" style="left:544.41px;top:991.00px;font-size:20.2px;color:#33434b;letter-spacing:-0.290px;">$1,372,974</div>
<svg class="r" style="left:711px;top:991px;" width="20" height="20" viewBox="0 0 20 20" fill="none"><path d="M10,3 L10,17.5 M3.5,9 L10,3 L16.5,9" stroke="#5dd6bf" stroke-width="2.1" stroke-linecap="round" stroke-linejoin="round"/></svg>
<div class="t" style="left:743.65px;top:991.00px;font-size:20.2px;color:#33434b;letter-spacing:-0.750px;">4.6%</div>
<div class="t" style="left:858.69px;top:991.00px;font-size:20.2px;color:#33434b;letter-spacing:-0.289px;">$23,339,198</div>
<div class="t" style="left:1025.30px;top:991.00px;font-size:20.2px;color:#33434b;letter-spacing:-0.290px;">$21,966,224</div>
<div class="r" style="left:1202px;top:996.30px;width:222px;height:8.6px;border-radius:4.3px;overflow:hidden;"><div style="position:absolute;left:0px;top:0;width:14px;height:100%;background:#6f87b8"></div><div style="position:absolute;left:14px;top:0;width:166px;height:100%;background:#ffbf00"></div><div style="position:absolute;left:180px;top:0;width:30px;height:100%;background:#546e7a"></div><div style="position:absolute;left:210px;top:0;width:7px;height:100%;background:#68b5dc"></div><div style="position:absolute;left:217px;top:0;width:5px;height:100%;background:#a89090"></div></div>
<div class="r" style="left:1500px;top:984px;width:85px;height:33px;background:#86e5c0;border-radius:5px 0 0 5px;"></div>
<div class="t" style="left:1512.81px;top:991.00px;font-size:20.2px;color:#33434b;letter-spacing:-0.362px;">-$1.4M</div>
<div class="r" style="left:1584.5px;top:983px;width:1.5px;height:36px;background:#8c9aa2;"></div>
<div class="t" style="left:1772.67px;top:991.00px;font-size:20.2px;color:#33434b;letter-spacing:-0.657px;">$812</div>
<div class="t" style="left:1906.38px;top:991.00px;font-size:20.2px;color:#33434b;letter-spacing:-0.395px;">27,052</div>
<div class="r" style="left:150px;top:1024px;width:1842px;height:48px;background:#f3f6f9;"></div>
<div class="r" style="left:504px;top:1025.42px;width:172px;height:45.72px;background:#e3fdd1;"></div>
<div class="t" style="left:211.20px;top:1038.00px;font-size:20.2px;color:#33434b;letter-spacing:-0.007px;">Fayetteville Health System ...</div>
<div class="t" style="left:561.26px;top:1038.00px;font-size:20.2px;color:#33434b;letter-spacing:-0.309px;">$605,292</div>
<svg class="r" style="left:711px;top:1038px;" width="20" height="20" viewBox="0 0 20 20" fill="none"><path d="M10,3 L10,17.5 M3.5,9 L10,3 L16.5,9" stroke="#5dd6bf" stroke-width="2.1" stroke-linecap="round" stroke-linejoin="round"/></svg>
<div class="t" style="left:743.62px;top:1038.00px;font-size:20.2px;color:#33434b;letter-spacing:-0.740px;">6.4%</div>
<div class="t" style="left:869.60px;top:1038.00px;font-size:20.2px;color:#33434b;letter-spacing:-0.289px;">$9,786,586</div>
<div class="t" style="left:1036.21px;top:1038.00px;font-size:20.2px;color:#33434b;letter-spacing:-0.290px;">$9,181,294</div>
<div class="r" style="left:1202px;top:1043.52px;width:222px;height:8.6px;border-radius:4.3px;overflow:hidden;"><div style="position:absolute;left:0px;top:0;width:58px;height:100%;background:#6f87b8"></div><div style="position:absolute;left:58px;top:0;width:38px;height:100%;background:#ffbf00"></div><div style="position:absolute;left:96px;top:0;width:43px;height:100%;background:#546e7a"></div><div style="position:absolute;left:139px;top:0;width:49px;height:100%;background:#68b5dc"></div><div style="position:absolute;left:188px;top:0;width:34px;height:100%;background:#a89090"></div></div>
<div class="r" style="left:1511px;top:1031px;width:74px;height:33px;background:#b2f5c8;border-radius:5px 0 0 5px;"></div>
<div class="t" style="left:1523.68px;top:1038.00px;font-size:20.2px;color:#33434b;letter-spacing:-0.369px;">-$.6M</div>
<div class="r" style="left:1584.5px;top:1030px;width:1.5px;height:36px;background:#8c9aa2;"></div>
<div class="t" style="left:1772.67px;top:1038.00px;font-size:20.2px;color:#33434b;letter-spacing:-0.657px;">$779</div>
<div class="t" style="left:1907.71px;top:1038.00px;font-size:20.2px;color:#33434b;letter-spacing:-0.383px;">11,786</div>
<div class="r" style="left:150px;top:1072px;width:1842px;height:47px;background:#ffffff;"></div>
<div class="r" style="left:504px;top:1072.64px;width:172px;height:45.72px;background:#e3fdd1;"></div>
<div class="t" style="left:212.80px;top:1085.00px;font-size:20.2px;color:#33434b;">Winston-Salem Health ...</div>
<div class="t" style="left:561.16px;top:1085.00px;font-size:20.2px;color:#33434b;letter-spacing:-0.309px;">$574,653</div>
<svg class="r" style="left:711px;top:1086px;" width="20" height="20" viewBox="0 0 20 20" fill="none"><path d="M10,3 L10,17.5 M3.5,9 L10,3 L16.5,9" stroke="#5dd6bf" stroke-width="2.1" stroke-linecap="round" stroke-linejoin="round"/></svg>
<div class="t" style="left:743.65px;top:1085.00px;font-size:20.2px;color:#33434b;letter-spacing:-0.750px;">4.6%</div>
<div class="t" style="left:869.60px;top:1085.00px;font-size:20.2px;color:#33434b;letter-spacing:-0.289px;">$5,183,013</div>
<div class="t" style="left:1036.41px;top:1085.00px;font-size:20.2px;color:#33434b;letter-spacing:-0.289px;">$4,608,360</div>
<div class="r" style="left:1202px;top:1090.74px;width:222px;height:8.6px;border-radius:4.3px;overflow:hidden;"><div style="position:absolute;left:0px;top:0;width:32px;height:100%;background:#6f87b8"></div><div style="position:absolute;left:32px;top:0;width:21px;height:100%;background:#ffbf00"></div><div style="position:absolute;left:53px;top:0;width:132px;height:100%;background:#546e7a"></div><div style="position:absolute;left:185px;top:0;width:16px;height:100%;background:#68b5dc"></div><div style="position:absolute;left:201px;top:0;width:21px;height:100%;background:#a89090"></div></div>
<div class="r" style="left:1511px;top:1079px;width:74px;height:33px;background:#b2f5c8;border-radius:5px 0 0 5px;"></div>
<div class="t" style="left:1523.68px;top:1085.00px;font-size:20.2px;color:#33434b;letter-spacing:-0.369px;">-$.6M</div>
<div class="r" style="left:1584.5px;top:1077px;width:1.5px;height:36px;background:#8c9aa2;"></div>
<div class="t" style="left:1756.15px;top:1085.00px;font-size:20.2px;color:#33434b;letter-spacing:-0.550px;">$1,004</div>
<div class="t" style="left:1917.13px;top:1085.00px;font-size:20.2px;color:#33434b;letter-spacing:-0.408px;">4,590</div>
<div class="r" style="left:150px;top:1119px;width:1842px;height:47px;background:#f3f6f9;"></div>
<div class="r" style="left:504px;top:1119.86px;width:172px;height:45.72px;background:#e3fdd1;"></div>
<div class="t" style="left:211.80px;top:1132.00px;font-size:20.2px;color:#33434b;letter-spacing:0.084px;">Charlotte Health System...</div>
<div class="t" style="left:561.16px;top:1132.00px;font-size:20.2px;color:#33434b;letter-spacing:-0.309px;">$329,695</div>
<svg class="r" style="left:711px;top:1133px;" width="20" height="20" viewBox="0 0 20 20" fill="none"><path d="M10,3 L10,17.5 M3.5,9 L10,3 L16.5,9" stroke="#5dd6bf" stroke-width="2.1" stroke-linecap="round" stroke-linejoin="round"/></svg>
<div class="t" style="left:743.62px;top:1132.00px;font-size:20.2px;color:#33434b;letter-spacing:-0.740px;">6.8%</div>
<div class="t" style="left:869.60px;top:1132.00px;font-size:20.2px;color:#33434b;letter-spacing:-0.289px;">$4,686,586</div>
<div class="t" style="left:1036.60px;top:1132.00px;font-size:20.2px;color:#33434b;letter-spacing:-0.289px;">$4,356,891</div>
<div class="r" style="left:1202px;top:1137.96px;width:222px;height:8.6px;border-radius:4.3px;overflow:hidden;"><div style="position:absolute;left:0px;top:0;width:14px;height:100%;background:#6f87b8"></div><div style="position:absolute;left:14px;top:0;width:166px;height:100%;background:#ffbf00"></div><div style="position:absolute;left:180px;top:0;width:30px;height:100%;background:#546e7a"></div><div style="position:absolute;left:210px;top:0;width:7px;height:100%;background:#68b5dc"></div><div style="position:absolute;left:217px;top:0;width:5px;height:100%;background:#a89090"></div></div>
<div class="r" style="left:1511px;top:1126px;width:74px;height:33px;background:#b2f5c8;border-radius:5px 0 0 5px;"></div>
<div class="t" style="left:1523.68px;top:1132.00px;font-size:20.2px;color:#33434b;letter-spacing:-0.369px;">-$.3M</div>
<div class="r" style="left:1584.5px;top:1124px;width:1.5px;height:36px;background:#8c9aa2;"></div>
<div class="t" style="left:1772.58px;top:1132.00px;font-size:20.2px;color:#33434b;letter-spacing:-0.659px;">$693</div>
<div class="t" style="left:1917.30px;top:1132.00px;font-size:20.2px;color:#33434b;letter-spacing:-0.401px;">6,287</div>
<div class="r" style="left:150px;top:1166px;width:1842px;height:47px;background:#ffffff;"></div>
<div class="r" style="left:504px;top:1167.08px;width:172px;height:45.72px;background:#e3fdd1;"></div>
<div class="t" style="left:211.20px;top:1180.00px;font-size:20.2px;color:#33434b;letter-spacing:0.117px;">Durham Health System ...</div>
<div class="t" style="left:561.16px;top:1180.00px;font-size:20.2px;color:#33434b;letter-spacing:-0.309px;">$294,705</div>
<svg class="r" style="left:711px;top:1180px;" width="20" height="20" viewBox="0 0 20 20" fill="none"><path d="M10,3 L10,17.5 M3.5,9 L10,3 L16.5,9" stroke="#5dd6bf" stroke-width="2.1" stroke-linecap="round" stroke-linejoin="round"/></svg>
<div class="t" style="left:743.65px;top:1180.00px;font-size:20.2px;color:#33434b;letter-spacing:-0.750px;">4.6%</div>
<div class="t" style="left:869.60px;top:1180.00px;font-size:20.2px;color:#33434b;letter-spacing:-0.289px;">$3,683,013</div>
<div class="t" style="left:1036.50px;top:1180.00px;font-size:20.2px;color:#33434b;letter-spacing:-0.289px;">$3,388,308</div>
<div class="r" style="left:1202px;top:1185.18px;width:222px;height:8.6px;border-radius:4.3px;overflow:hidden;"><div style="position:absolute;left:0px;top:0;width:58px;height:100%;background:#6f87b8"></div><div style="position:absolute;left:58px;top:0;width:38px;height:100%;background:#ffbf00"></div><div style="position:absolute;left:96px;top:0;width:43px;height:100%;background:#546e7a"></div><div style="position:absolute;left:139px;top:0;width:49px;height:100%;background:#68b5dc"></div><div style="position:absolute;left:188px;top:0;width:34px;height:100%;background:#a89090"></div></div>
<div class="r" style="left:1511px;top:1173px;width:74px;height:33px;background:#b2f5c8;border-radius:5px 0 0 5px;"></div>
<div class="t" style="left:1523.68px;top:1180.00px;font-size:20.2px;color:#33434b;letter-spacing:-0.369px;">-$.3M</div>
<div class="r" style="left:1584.5px;top:1171px;width:1.5px;height:36px;background:#8c9aa2;"></div>
<div class="t" style="left:1772.67px;top:1180.00px;font-size:20.2px;color:#33434b;letter-spacing:-0.657px;">$772</div>
<div class="t" style="left:1917.32px;top:1180.00px;font-size:20.2px;color:#33434b;letter-spacing:-0.406px;">4,389</div>
<div class="r" style="left:150px;top:1213px;width:1842px;height:48px;background:#eef2f5;"></div>
<div class="r" style="left:504px;top:1214.30px;width:172px;height:45.72px;background:#c6f8cb;"></div>
<svg class="r" style="left:182.9px;top:1231px;" width="20" height="12" viewBox="0 0 20 12" fill="none"><path d="M3,3 L9.5,8.8 L16,3" stroke="#4f6b78" stroke-width="2.8" stroke-linecap="round" stroke-linejoin="round"/></svg>
<div class="t" style="left:211.80px;top:1227.00px;font-size:20.2px;color:#33434b;letter-spacing:0.115px;">Care Coordination Model ...</div>
<div class="t" style="left:544.61px;top:1227.00px;font-size:20.2px;color:#33434b;letter-spacing:-0.289px;">$1,049,380</div>
<svg class="r" style="left:712px;top:1227px;" width="20" height="20" viewBox="0 0 20 20" fill="none"><path d="M10,3 L10,17 M3.5,11 L10,17.5 L16.5,11" stroke="#ff8060" stroke-width="2.1" stroke-linecap="round" stroke-linejoin="round"/></svg>
<div class="t" style="left:743.62px;top:1227.00px;font-size:20.2px;color:#33434b;letter-spacing:-0.742px;">9.1%</div>
<div class="t" style="left:858.60px;top:1227.00px;font-size:20.2px;color:#33434b;letter-spacing:-0.290px;">$36,404,430</div>
<div class="t" style="left:1025.50px;top:1227.00px;font-size:20.2px;color:#33434b;letter-spacing:-0.290px;">$35,355,050</div>
<div class="r" style="left:1202px;top:1232.40px;width:222px;height:8.6px;border-radius:4.3px;overflow:hidden;"><div style="position:absolute;left:0px;top:0;width:32px;height:100%;background:#6f87b8"></div><div style="position:absolute;left:32px;top:0;width:21px;height:100%;background:#ffbf00"></div><div style="position:absolute;left:53px;top:0;width:132px;height:100%;background:#546e7a"></div><div style="position:absolute;left:185px;top:0;width:16px;height:100%;background:#68b5dc"></div><div style="position:absolute;left:201px;top:0;width:21px;height:100%;background:#a89090"></div></div>
<div class="r" style="left:1500px;top:1220px;width:85px;height:33px;background:#86e5c0;border-radius:5px 0 0 5px;"></div>
<div class="t" style="left:1512.81px;top:1227.00px;font-size:20.2px;color:#33434b;letter-spacing:-0.362px;">-$1.0M</div>
<div class="r" style="left:1584.5px;top:1219px;width:1.5px;height:36px;background:#8c9aa2;"></div>
<div class="t" style="left:1761.78px;top:1227.00px;font-size:20.2px;color:#33434b;letter-spacing:-0.621px;">$1010</div>
<div class="t" style="left:1906.29px;top:1227.00px;font-size:20.2px;color:#33434b;letter-spacing:-0.398px;">35,005</div>
<div class="r" style="left:150px;top:1261px;width:1842px;height:47px;background:#ffffff;"></div>
<div class="r" style="left:504px;top:1261.52px;width:172px;height:45.72px;background:#e3fdd1;"></div>
<div class="t" style="left:211.20px;top:1274.00px;font-size:20.2px;color:#33434b;letter-spacing:-0.007px;">Fayetteville Health System ...</div>
<div class="t" style="left:561.26px;top:1274.00px;font-size:20.2px;color:#33434b;letter-spacing:-0.309px;">$326,261</div>
<svg class="r" style="left:711px;top:1275px;" width="20" height="20" viewBox="0 0 20 20" fill="none"><path d="M10,3 L10,17.5 M3.5,9 L10,3 L16.5,9" stroke="#5dd6bf" stroke-width="2.1" stroke-linecap="round" stroke-linejoin="round"/></svg>
<div class="t" style="left:743.65px;top:1274.00px;font-size:20.2px;color:#33434b;letter-spacing:-0.750px;">4.6%</div>
<div class="t" style="left:858.69px;top:1274.00px;font-size:20.2px;color:#33434b;letter-spacing:-0.289px;">$20,683,013</div>
<div class="t" style="left:1025.69px;top:1274.00px;font-size:20.2px;color:#33434b;letter-spacing:-0.289px;">$20,356,752</div>
<div class="r" style="left:1202px;top:1279.62px;width:222px;height:8.6px;border-radius:4.3px;overflow:hidden;"><div style="position:absolute;left:0px;top:0;width:58px;height:100%;background:#6f87b8"></div><div style="position:absolute;left:58px;top:0;width:38px;height:100%;background:#ffbf00"></div><div style="position:absolute;left:96px;top:0;width:43px;height:100%;background:#546e7a"></div><div style="position:absolute;left:139px;top:0;width:49px;height:100%;background:#68b5dc"></div><div style="position:absolute;left:188px;top:0;width:34px;height:100%;background:#a89090"></div></div>
<div class="r" style="left:1511px;top:1268px;width:74px;height:33px;background:#b2f5c8;border-radius:5px 0 0 5px;"></div>
<div class="t" style="left:1523.68px;top:1274.00px;font-size:20.2px;color:#33434b;letter-spacing:-0.369px;">-$.3M</div>
<div class="r" style="left:1584.5px;top:1266px;width:1.5px;height:36px;background:#8c9aa2;"></div>
<div class="t" style="left:1772.67px;top:1274.00px;font-size:20.2px;color:#33434b;letter-spacing:-0.657px;">$912</div>
<div class="t" style="left:1906.38px;top:1274.00px;font-size:20.2px;color:#33434b;letter-spacing:-0.395px;">23,321</div>
<div class="r" style="left:150px;top:1308px;width:1842px;height:47px;background:#f3f6f9;"></div>
<div class="r" style="left:504px;top:1308.74px;width:172px;height:45.72px;background:#fff0cc;"></div>
<div class="t" style="left:211.80px;top:1321.00px;font-size:20.2px;color:#33434b;letter-spacing:0.084px;">Charlotte Health System...</div>
<div class="t" style="left:621.26px;top:1321.00px;font-size:20.2px;color:#33434b;letter-spacing:-0.559px;">$0</div>
<svg class="r" style="left:712px;top:1322px;" width="20" height="20" viewBox="0 0 20 20" fill="none"><path d="M10,3 L10,17 M3.5,11 L10,17.5 L16.5,11" stroke="#ff8060" stroke-width="2.1" stroke-linecap="round" stroke-linejoin="round"/></svg>
<div class="t" style="left:743.59px;top:1321.00px;font-size:20.2px;color:#33434b;letter-spacing:-0.732px;">1.8%</div>
<div class="t" style="left:860.15px;top:1321.00px;font-size:20.2px;color:#33434b;letter-spacing:-0.285px;">$11,779,246</div>
<div class="t" style="left:1025.59px;top:1321.00px;font-size:20.2px;color:#33434b;letter-spacing:-0.289px;">$12,165,538</div>
<div class="r" style="left:1202px;top:1326.84px;width:222px;height:8.6px;border-radius:4.3px;overflow:hidden;"><div style="position:absolute;left:0px;top:0;width:32px;height:100%;background:#6f87b8"></div><div style="position:absolute;left:32px;top:0;width:21px;height:100%;background:#ffbf00"></div><div style="position:absolute;left:53px;top:0;width:132px;height:100%;background:#546e7a"></div><div style="position:absolute;left:185px;top:0;width:16px;height:100%;background:#68b5dc"></div><div style="position:absolute;left:201px;top:0;width:21px;height:100%;background:#a89090"></div></div>
<div class="r" style="left:1585px;top:1315px;width:69px;height:33px;background:#ffe2a8;border-radius:0 5px 5px 0;"></div>
<div class="t" style="left:1597.80px;top:1321.00px;font-size:20.2px;color:#33434b;letter-spacing:-0.431px;">$.4M</div>
<div class="r" style="left:1584.5px;top:1313px;width:1.5px;height:36px;background:#8c9aa2;"></div>
<div class="t" style="left:1756.53px;top:1321.00px;font-size:20.2px;color:#33434b;letter-spacing:-0.546px;">$1,379</div>
<div class="t" style="left:1917.31px;top:1321.00px;font-size:20.2px;color:#33434b;letter-spacing:-0.403px;">8,822</div>
<div class="r" style="left:150px;top:1355px;width:1842px;height:47px;background:#ffffff;"></div>
<div class="r" style="left:504px;top:1355.96px;width:172px;height:45.72px;background:#fff0cc;"></div>
<div class="t" style="left:211.20px;top:1368.00px;font-size:20.2px;color:#33434b;letter-spacing:0.117px;">Durham Health System ...</div>
<div class="t" style="left:621.26px;top:1368.00px;font-size:20.2px;color:#33434b;letter-spacing:-0.559px;">$0</div>
<svg class="r" style="left:711px;top:1369px;" width="20" height="20" viewBox="0 0 20 20" fill="none"><path d="M10,3 L10,17.5 M3.5,9 L10,3 L16.5,9" stroke="#5dd6bf" stroke-width="2.1" stroke-linecap="round" stroke-linejoin="round"/></svg>
<div class="t" style="left:743.65px;top:1368.00px;font-size:20.2px;color:#33434b;letter-spacing:-0.750px;">4.6%</div>
<div class="t" style="left:869.60px;top:1368.00px;font-size:20.2px;color:#33434b;letter-spacing:-0.289px;">$1,683,013</div>
<div class="t" style="left:1036.50px;top:1368.00px;font-size:20.2px;color:#33434b;letter-spacing:-0.289px;">$1,683,013</div>
<div class="r" style="left:1202px;top:1374.06px;width:222px;height:8.6px;border-radius:4.3px;overflow:hidden;"><div style="position:absolute;left:0px;top:0;width:58px;height:100%;background:#6f87b8"></div><div style="position:absolute;left:58px;top:0;width:38px;height:100%;background:#ffbf00"></div><div style="position:absolute;left:96px;top:0;width:43px;height:100%;background:#546e7a"></div><div style="position:absolute;left:139px;top:0;width:49px;height:100%;background:#68b5dc"></div><div style="position:absolute;left:188px;top:0;width:34px;height:100%;background:#a89090"></div></div>
<div class="r" style="left:1585px;top:1362px;width:69px;height:33px;background:#ffe2a8;border-radius:0 5px 5px 0;"></div>
<div class="t" style="left:1597.80px;top:1368.00px;font-size:20.2px;color:#33434b;letter-spacing:-0.431px;">$.5M</div>
<div class="r" style="left:1584.5px;top:1360px;width:1.5px;height:36px;background:#8c9aa2;"></div>
<div class="t" style="left:1772.48px;top:1368.00px;font-size:20.2px;color:#33434b;letter-spacing:-0.660px;">$890</div>
<div class="t" style="left:1906.38px;top:1368.00px;font-size:20.2px;color:#33434b;letter-spacing:-0.395px;">23,321</div>
<div class="r" style="left:0px;top:1376px;width:2040px;height:24px;background:#ffffff;"></div>
<div class="r" style="left:3px;top:1376px;width:2034px;height:21px;background:#939fa6;border-radius:0 0 13px 13px;"></div>
<div class="r" style="left:2020px;top:16px;width:17px;height:1360px;background:#939fa6;"></div>
</body></html>
